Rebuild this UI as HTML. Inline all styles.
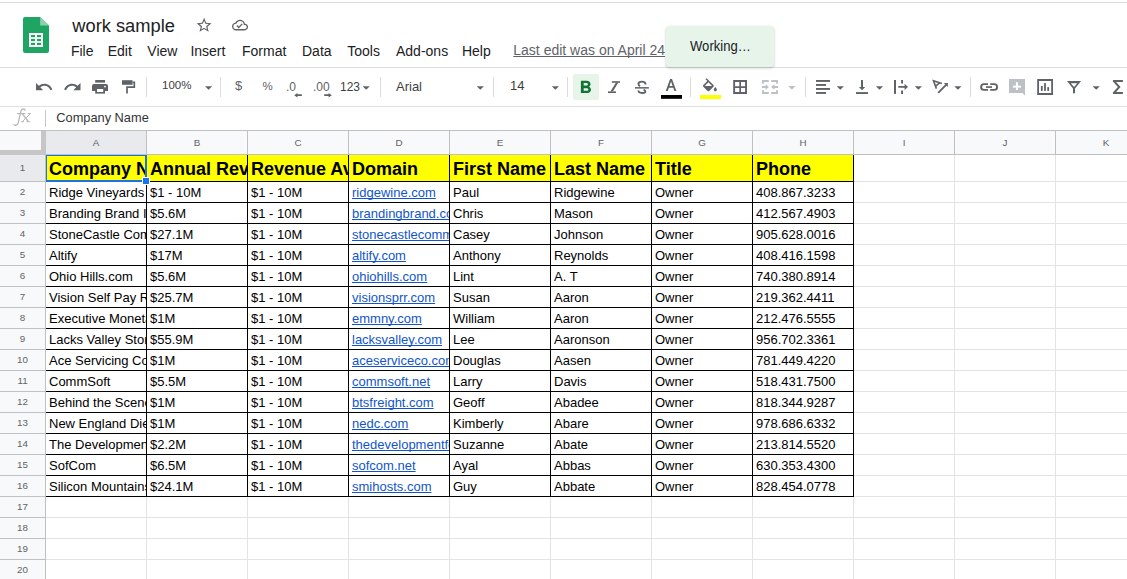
<!DOCTYPE html><html><head><meta charset="utf-8"><style>
html,body{margin:0;padding:0;background:#fff;width:1127px;height:579px;overflow:hidden;position:relative;font-family:"Liberation Sans",sans-serif}
.t{position:absolute;white-space:pre;line-height:normal}
.r{position:absolute}
.c{position:absolute;overflow:hidden;white-space:pre;line-height:normal}
.c span{position:absolute;white-space:pre}
</style></head><body>
<div class="r" style="left:0px;top:2px;width:1127px;height:1px;background:#dadce0;"></div>
<svg style="position:absolute;left:0;top:0" width="1127" height="130" viewBox="0 0 1127 130">
<path d="M25 17 H40.2 L49 25.4 V51 a2 2 0 0 1 -2 2 H25 a2 2 0 0 1 -2 -2 V19 a2 2 0 0 1 2 -2z" fill="#1fa463"/>
<path d="M40.2 17 L49 25.4 H40.2z" fill="#8ed1b1"/>
<rect x="29" y="33" width="14" height="14" fill="#fff"/>
<rect x="31" y="35" width="4" height="2.2" fill="#1fa463"/><rect x="37" y="35" width="4" height="2.2" fill="#1fa463"/>
<rect x="31" y="38.9" width="4" height="2.2" fill="#1fa463"/><rect x="37" y="38.9" width="4" height="2.2" fill="#1fa463"/>
<rect x="31" y="42.8" width="4" height="2.2" fill="#1fa463"/><rect x="37" y="42.8" width="4" height="2.2" fill="#1fa463"/>
</svg>
<div class="t" style="left:72.3px;top:15.14px;font-size:18.3px;color:#202124;font-weight:normal;">work sample</div>
<svg style="position:absolute;left:0;top:0" width="300" height="60" viewBox="0 0 300 60">
<path transform="translate(195.2,16.3) scale(0.74)" fill="#5f6368" d="M22 9.24l-7.19-.62L12 2 9.19 8.63 2 9.24l5.46 4.73L5.82 21 12 17.27 18.18 21l-1.63-7.03L22 9.24zM12 15.4l-3.76 2.27 1-4.28-3.32-2.88 4.38-.38L12 6.1l1.71 4.04 4.38.38-3.32 2.88 1 4.28L12 15.4z"/>
<path transform="translate(232,17) scale(0.67)" fill="#5f6368" d="M19.35 10.04C18.67 6.59 15.64 4 12 4 9.11 4 6.6 5.64 5.35 8.04 2.34 8.36 0 10.91 0 14c0 3.31 2.690 6 6 6h13c2.76 0 5-2.24 5-5 0-2.64-2.05-4.780-4.650-4.960zM19 18H6c-2.21 0-4-1.79-4-4 0-2.05 1.53-3.760 3.56-3.970l1.07-.11.5-.95C8.08 7.14 9.94 6 12 6c2.62 0 4.88 1.860 5.390 4.430l.3 1.5 1.53.11c1.56.1 2.78 1.41 2.78 2.96 0 1.65-1.35 3-3 3zm-9-3.820l-2.090-2.090L6.5 13.5 10 17l6.010-6.010-1.410-1.410z"/>
</svg>
<div class="t" style="left:70.9px;top:42.93px;font-size:14px;color:#202124;font-weight:normal;">File</div>
<div class="t" style="left:107.7px;top:42.93px;font-size:14px;color:#202124;font-weight:normal;">Edit</div>
<div class="t" style="left:147.3px;top:42.93px;font-size:14px;color:#202124;font-weight:normal;">View</div>
<div class="t" style="left:190.4px;top:42.93px;font-size:14px;color:#202124;font-weight:normal;">Insert</div>
<div class="t" style="left:242px;top:42.93px;font-size:14px;color:#202124;font-weight:normal;">Format</div>
<div class="t" style="left:302px;top:42.93px;font-size:14px;color:#202124;font-weight:normal;">Data</div>
<div class="t" style="left:347.3px;top:42.93px;font-size:14px;color:#202124;font-weight:normal;">Tools</div>
<div class="t" style="left:396px;top:42.93px;font-size:14px;color:#202124;font-weight:normal;">Add-ons</div>
<div class="t" style="left:461.9px;top:42.93px;font-size:14px;color:#202124;font-weight:normal;">Help</div>
<div class="t" style="left:513.3px;top:42.03px;font-size:14px;color:#5f6368;font-weight:normal;text-decoration:underline;text-decoration-skip-ink:none;">Last edit was on April 24</div>
<div class="r" style="left:0px;top:67px;width:1127px;height:1px;background:#dadce0;"></div>
<div class="r" style="left:0px;top:106px;width:1127px;height:1px;background:#e0e0e0;"></div>
<svg style="position:absolute;left:0;top:68px" width="1127" height="38" viewBox="0 68 1127 38">
<path transform="translate(34.4,77.4) scale(0.797)" fill="#5f6368" d="M12.5 8c-2.65 0-5.05.99-6.9 2.6L2 7v9h9l-3.62-3.62c1.39-1.16 3.16-1.880 5.120-1.880 3.54 0 6.55 2.31 7.6 5.5l2.37-.78C21.08 11.03 17.15 8 12.5 8z"/>
<path transform="translate(62.97,77.4) scale(0.797)" fill="#5f6368" d="M18.4 10.6C16.55 8.99 14.15 8 11.5 8c-4.65 0-8.58 3.03-9.96 7.22L3.9 16c1.05-3.19 4.05-5.5 7.6-5.5 1.95 0 3.73.72 5.12 1.88L13 16h9V7l-3.6 3.6z"/>
<rect x="95.2" y="80" width="9.8" height="2.6" fill="#5f6368"/>
<path d="M94 84 H106 a2 2 0 0 1 2 2 V91 H92 V86 a2 2 0 0 1 2 -2z" fill="#5f6368"/>
<rect x="95.2" y="88" width="9.8" height="5.6" fill="#5f6368"/>
<rect x="97" y="89" width="6.2" height="3" fill="#fff"/>
<circle cx="105" cy="86.6" r="0.9" fill="#fff"/>
<rect x="122" y="80.2" width="10.5" height="4.6" fill="#5f6368"/>
<path d="M132.5 82.3 H134.3 V87.2 H127 V93.6" fill="none" stroke="#5f6368" stroke-width="1.7"/>
<rect x="146" y="77" width="1" height="20" fill="#dadce0"/>
<rect x="220" y="77" width="1" height="20" fill="#dadce0"/>
<rect x="380" y="77" width="1" height="20" fill="#dadce0"/>
<rect x="493" y="77" width="1" height="20" fill="#dadce0"/>
<rect x="567" y="77" width="1" height="20" fill="#dadce0"/>
<rect x="690" y="77" width="1" height="20" fill="#dadce0"/>
<rect x="805" y="77" width="1" height="20" fill="#dadce0"/>
<rect x="970" y="77" width="1" height="20" fill="#dadce0"/>
<path d="M205 86.2 h7.2 l-3.6 3.6z" fill="#5f6368"/>
<path d="M362.6 86.2 h7.2 l-3.6 3.6z" fill="#5f6368"/>
<path d="M476.7 86.2 h7.2 l-3.6 3.6z" fill="#5f6368"/>
<path d="M551.8 86.2 h7.2 l-3.6 3.6z" fill="#5f6368"/>
<path d="M836.7 86.2 h7.2 l-3.6 3.6z" fill="#5f6368"/>
<path d="M875.9 86.2 h7.2 l-3.6 3.6z" fill="#5f6368"/>
<path d="M914.8 86.2 h7.2 l-3.6 3.6z" fill="#5f6368"/>
<path d="M954.3 86.2 h7.2 l-3.6 3.6z" fill="#5f6368"/>
<path d="M1092.6 86.2 h7.2 l-3.6 3.6z" fill="#5f6368"/>
<path d="M788.3 86.1 h7.2 l-3.6 3.6z" fill="#bdc1c6"/>
<path d="M301.9 94.3 V96 H297.5 V97.4 L294.2 95.15 L297.5 92.9 V94.3z" fill="#5f6368"/>
<path d="M324.2 94.3 V96 H328.6 V97.4 L331.8 95.15 L328.6 92.9 V94.3z" fill="#5f6368"/>
<rect x="573" y="74" width="26" height="26" rx="2" fill="#e6f4ea"/>
<path transform="translate(574.3,77.32) scale(0.94,0.87)" fill="#137333" d="M15.6 10.79c.97-.67 1.65-1.77 1.650-2.790 0-2.26-1.75-4-4-4H7v14h7.04c2.09 0 3.71-1.7 3.71-3.790 0-1.520-.86-2.820-2.150-3.420zM10 6.5h3c.83 0 1.5.67 1.5 1.5s-.67 1.5-1.5 1.5h-3v-3zm3.5 9H10v-3h3.5c.83 0 1.5.67 1.5 1.5s-.67 1.5-1.5 1.5z"/>
<rect x="611.8" y="81.2" width="8.2" height="1.6" fill="#5f6368"/>
<rect x="608" y="91.4" width="8" height="1.6" fill="#5f6368"/>
<path d="M616 82.6 L618.4 82.6 L612.8 91.6 L610.4 91.6z" fill="#5f6368"/>
<rect x="635" y="87.1" width="13.9" height="1.5" fill="#5f6368"/>
<path d="M645.6 84.4 C645.6 82.2 643.8 81.6 642 81.6 C640 81.6 638.4 82.4 638.4 84 C638.4 85.2 639.2 85.8 640.2 86.2" fill="none" stroke="#5f6368" stroke-width="1.8"/>
<path d="M643.6 89.6 C644.6 90 645.4 90.6 645.4 91.4 C645.4 92.5 644 93 642 93 C639.8 93 638.4 92.2 638.4 90.6" fill="none" stroke="#5f6368" stroke-width="1.8"/>
<path d="M665.7 90.9 L670.1 79 H672 L676.4 90.9 H674.4 L673.2 87.7 H668.9 L667.7 90.9z M669.5 86 H672.6 L671.05 81.6z" fill="#5f6368" fill-rule="evenodd"/>
<rect x="661" y="95" width="21" height="3.8" fill="#000"/>
<path transform="translate(700.7,78.2) scale(0.77)" fill="#5f6368" d="M16.56 8.94L7.62 0 6.21 1.41l2.38 2.38-5.15 5.15c-.59.59-.59 1.54 0 2.12l5.5 5.5c.29.29.68.44 1.06.44s.77-.15 1.06-.44l5.5-5.5c.59-.58.59-1.53 0-2.12zM5.21 10L10 5.21 14.79 10H5.21zM19 11.5s-2 2.17-2 3.5c0 1.1.9 2 2 2s2-.9 2-2c0-1.33-2-3.5-2-3.5z"/>
<rect x="700" y="95" width="21" height="4" fill="#ffff00"/>
<path fill="#5f6368" fill-rule="evenodd" d="M733.2 80 H747 V93.9 H733.2z M735.1 81.9 V86.2 H739.3 V81.9z M741 81.9 V86.2 H745.1 V81.9z M735.1 87.9 V92 H739.3 V87.9z M741 87.9 V92 H745.1 V87.9z"/>
<path fill="#bdc1c6" d="M762 80 H768.8 V81.9 H763.9 V83.8 H762z M778 80 H771.2 V81.9 H776.1 V83.8 H778z M762 93.9 H768.8 V92 H763.9 V90.3 H762z M778 93.9 H771.2 V92 H776.1 V90.3 H778z"/>
<path fill="#bdc1c6" d="M762 86.1 H765.6 V84.2 L768.9 87 L765.6 89.8 V87.9 H762z M778 86.1 H774.4 V84.2 L771.1 87 L774.4 89.8 V87.9 H778z"/>
<rect x="816" y="80" width="14" height="1.9" fill="#5f6368"/>
<rect x="816" y="84" width="10" height="1.9" fill="#5f6368"/>
<rect x="816" y="88" width="14" height="1.9" fill="#5f6368"/>
<rect x="816" y="92" width="10" height="1.9" fill="#5f6368"/>
<rect x="861" y="80" width="2" height="7.5" fill="#5f6368"/>
<path d="M858.9 87 H865.2 L862.05 90.2z" fill="#5f6368"/>
<rect x="856" y="92.1" width="12" height="1.9" fill="#5f6368"/>
<rect x="894" y="80" width="2" height="13.9" fill="#5f6368"/>
<rect x="901.1" y="80" width="1.9" height="3.5" fill="#5f6368"/>
<rect x="901.1" y="90.5" width="1.9" height="3.5" fill="#5f6368"/>
<path d="M898.3 86 H904.6 V83.8 L908 86.9 L904.6 90 V87.8 H898.3z" fill="#5f6368"/>
<path d="M936.4 88.6 L933.5 80.8 L941.9 83.5 M935.3 86.3 L939.7 82.8" fill="none" stroke="#5f6368" stroke-width="1.6" stroke-linejoin="miter"/>
<path d="M938.2 92.8 L946.3 84.7" fill="none" stroke="#5f6368" stroke-width="1.9"/>
<path d="M947.9 83.1 L947.9 87.1 L943.9 83.1z" fill="#5f6368"/>
<path d="M988 84.1 H984 A2.9 2.9 0 0 0 984 89.9 H988 M990.2 84.1 H994.2 A2.9 2.9 0 0 1 994.2 89.9 H990.2" fill="none" stroke="#5f6368" stroke-width="1.9"/>
<rect x="986" y="86.2" width="6" height="1.7" fill="#5f6368"/>
<path d="M1009 79 H1025 V95.6 L1022.4 93 H1009z" fill="#bdc1c6"/>
<rect x="1012.9" y="85.7" width="8.1" height="1.9" fill="#fff"/><rect x="1015.9" y="82.2" width="2.1" height="7.8" fill="#fff"/>
<path fill="#5f6368" fill-rule="evenodd" d="M1037.2 79.1 H1053 V94.9 H1037.2z M1039 80.9 V93.1 H1051.2 V80.9z"/>
<rect x="1040.9" y="86" width="1.8" height="4.9" fill="#5f6368"/><rect x="1044.1" y="83.1" width="1.8" height="7.8" fill="#5f6368"/><rect x="1047.3" y="87.1" width="1.8" height="3.8" fill="#5f6368"/>
<path fill="#5f6368" fill-rule="evenodd" d="M1067 81 H1081.1 L1075 88.4 V92.9 L1073 93.6 V88.4z M1070.8 83.3 H1077.3 L1074 87.1z"/>
<path fill="#5f6368" d="M1112.9 80 H1122.9 V81.9 H1116.1 L1120.6 86.9 L1116.1 92 H1122.9 V93.9 H1112.9 V92.4 L1117.9 86.9 L1112.9 81.5z"/>
</svg>
<div class="t" style="left:162px;top:79.19px;font-size:11.5px;color:#3c4043;font-weight:normal;">100%</div>
<div class="t" style="left:235px;top:78.23px;font-size:13px;color:#5f6368;font-weight:normal;">$</div>
<div class="t" style="left:262.5px;top:80.49px;font-size:11.5px;color:#5f6368;font-weight:normal;">%</div>
<div class="t" style="left:286px;top:80.04px;font-size:12px;color:#5f6368;font-weight:normal;">.0</div>
<div class="t" style="left:313px;top:80.04px;font-size:12px;color:#5f6368;font-weight:normal;">.00</div>
<div class="t" style="left:340px;top:80.14px;font-size:12px;color:#3c4043;font-weight:normal;">123</div>
<div class="t" style="left:396px;top:79.23px;font-size:13px;color:#3c4043;font-weight:normal;">Arial</div>
<div class="t" style="left:510px;top:78.23px;font-size:13px;color:#3c4043;font-weight:normal;">14</div>
<svg style="position:absolute;left:0;top:106px" width="46" height="24" viewBox="0 106 46 24"><g fill="none" stroke="#b8b8b8"><path d="M25.4 110.6 C24.8 108.5 21.6 108.2 20.9 111.2 L18.3 122.6 C17.7 125.3 15 126 13.3 124.4" stroke-width="1.3"/><path d="M16.9 113.6 H25.4" stroke-width="1.1"/><path d="M22.4 113.9 L28.4 121.6" stroke-width="1.5"/><path d="M30.2 113.8 L22.3 121.6" stroke-width="1"/><path d="M27.8 113.5 H30.9 M21 121.7 H24 M26.4 121.7 H30" stroke-width="1"/></g></svg>
<div class="r" style="left:45px;top:110px;width:1px;height:17px;background:#c8c8c8;"></div>
<div class="t" style="left:56.3px;top:110.42px;font-size:12.8px;color:#333333;font-weight:normal;">Company Name</div>
<div class="r" style="left:0;top:130px;width:1127px;height:1px;background:#c0c0c0"></div>
<div class="r" style="left:46px;top:131px;width:1081px;height:23px;background:#f8f9fa"></div>
<div class="r" style="left:46px;top:131px;width:100px;height:23px;background:#e8eaed"></div>
<div class="r" style="left:0;top:155px;width:45px;height:424px;background:#f8f9fa"></div>
<div class="r" style="left:0;top:155px;width:45px;height:26px;background:#e8eaed"></div>
<div class="r" style="left:0;top:131px;width:41px;height:19px;background:#f8f9fa"></div>
<div class="r" style="left:41px;top:131px;width:5px;height:24px;background:#c6c6c6"></div>
<div class="r" style="left:0;top:150px;width:46px;height:5px;background:#c6c6c6"></div>
<div class="r" style="left:46px;top:154px;width:1081px;height:1px;background:#c0c0c0"></div>
<div class="r" style="left:45px;top:155px;width:1px;height:424px;background:#c0c0c0"></div>
<div class="r" style="left:146px;top:131px;width:1px;height:23px;background:#c0c0c0"></div>
<div class="t" style="left:46px;top:136.83px;width:100px;text-align:center;font-size:9.8px;color:#5f6368">A</div>
<div class="r" style="left:247px;top:131px;width:1px;height:23px;background:#c0c0c0"></div>
<div class="t" style="left:147px;top:136.83px;width:100px;text-align:center;font-size:9.8px;color:#5f6368">B</div>
<div class="r" style="left:348px;top:131px;width:1px;height:23px;background:#c0c0c0"></div>
<div class="t" style="left:248px;top:136.83px;width:100px;text-align:center;font-size:9.8px;color:#5f6368">C</div>
<div class="r" style="left:449px;top:131px;width:1px;height:23px;background:#c0c0c0"></div>
<div class="t" style="left:349px;top:136.83px;width:100px;text-align:center;font-size:9.8px;color:#5f6368">D</div>
<div class="r" style="left:550px;top:131px;width:1px;height:23px;background:#c0c0c0"></div>
<div class="t" style="left:450px;top:136.83px;width:100px;text-align:center;font-size:9.8px;color:#5f6368">E</div>
<div class="r" style="left:651px;top:131px;width:1px;height:23px;background:#c0c0c0"></div>
<div class="t" style="left:551px;top:136.83px;width:100px;text-align:center;font-size:9.8px;color:#5f6368">F</div>
<div class="r" style="left:752px;top:131px;width:1px;height:23px;background:#c0c0c0"></div>
<div class="t" style="left:652px;top:136.83px;width:100px;text-align:center;font-size:9.8px;color:#5f6368">G</div>
<div class="r" style="left:853px;top:131px;width:1px;height:23px;background:#c0c0c0"></div>
<div class="t" style="left:753px;top:136.83px;width:100px;text-align:center;font-size:9.8px;color:#5f6368">H</div>
<div class="r" style="left:954px;top:131px;width:1px;height:23px;background:#c0c0c0"></div>
<div class="t" style="left:854px;top:136.83px;width:100px;text-align:center;font-size:9.8px;color:#5f6368">I</div>
<div class="r" style="left:1055px;top:131px;width:1px;height:23px;background:#c0c0c0"></div>
<div class="t" style="left:955px;top:136.83px;width:100px;text-align:center;font-size:9.8px;color:#5f6368">J</div>
<div class="r" style="left:1156px;top:131px;width:1px;height:23px;background:#c0c0c0"></div>
<div class="t" style="left:1056px;top:136.83px;width:100px;text-align:center;font-size:9.8px;color:#5f6368">K</div>
<div class="r" style="left:0;top:181px;width:45px;height:1px;background:#c0c0c0"></div>
<div class="t" style="left:0px;top:162.13px;width:45px;text-align:center;font-size:9.8px;color:#5f6368">1</div>
<div class="r" style="left:46px;top:181px;width:1081px;height:1px;background:#e2e3e3"></div>
<div class="r" style="left:0;top:202px;width:45px;height:1px;background:#c0c0c0"></div>
<div class="t" style="left:0px;top:186.13px;width:45px;text-align:center;font-size:9.8px;color:#5f6368">2</div>
<div class="r" style="left:46px;top:202px;width:1081px;height:1px;background:#e2e3e3"></div>
<div class="r" style="left:0;top:223px;width:45px;height:1px;background:#c0c0c0"></div>
<div class="t" style="left:0px;top:207.13px;width:45px;text-align:center;font-size:9.8px;color:#5f6368">3</div>
<div class="r" style="left:46px;top:223px;width:1081px;height:1px;background:#e2e3e3"></div>
<div class="r" style="left:0;top:244px;width:45px;height:1px;background:#c0c0c0"></div>
<div class="t" style="left:0px;top:228.13px;width:45px;text-align:center;font-size:9.8px;color:#5f6368">4</div>
<div class="r" style="left:46px;top:244px;width:1081px;height:1px;background:#e2e3e3"></div>
<div class="r" style="left:0;top:265px;width:45px;height:1px;background:#c0c0c0"></div>
<div class="t" style="left:0px;top:249.13px;width:45px;text-align:center;font-size:9.8px;color:#5f6368">5</div>
<div class="r" style="left:46px;top:265px;width:1081px;height:1px;background:#e2e3e3"></div>
<div class="r" style="left:0;top:286px;width:45px;height:1px;background:#c0c0c0"></div>
<div class="t" style="left:0px;top:270.13px;width:45px;text-align:center;font-size:9.8px;color:#5f6368">6</div>
<div class="r" style="left:46px;top:286px;width:1081px;height:1px;background:#e2e3e3"></div>
<div class="r" style="left:0;top:307px;width:45px;height:1px;background:#c0c0c0"></div>
<div class="t" style="left:0px;top:291.13px;width:45px;text-align:center;font-size:9.8px;color:#5f6368">7</div>
<div class="r" style="left:46px;top:307px;width:1081px;height:1px;background:#e2e3e3"></div>
<div class="r" style="left:0;top:328px;width:45px;height:1px;background:#c0c0c0"></div>
<div class="t" style="left:0px;top:312.13px;width:45px;text-align:center;font-size:9.8px;color:#5f6368">8</div>
<div class="r" style="left:46px;top:328px;width:1081px;height:1px;background:#e2e3e3"></div>
<div class="r" style="left:0;top:349px;width:45px;height:1px;background:#c0c0c0"></div>
<div class="t" style="left:0px;top:333.13px;width:45px;text-align:center;font-size:9.8px;color:#5f6368">9</div>
<div class="r" style="left:46px;top:349px;width:1081px;height:1px;background:#e2e3e3"></div>
<div class="r" style="left:0;top:370px;width:45px;height:1px;background:#c0c0c0"></div>
<div class="t" style="left:0px;top:354.13px;width:45px;text-align:center;font-size:9.8px;color:#5f6368">10</div>
<div class="r" style="left:46px;top:370px;width:1081px;height:1px;background:#e2e3e3"></div>
<div class="r" style="left:0;top:391px;width:45px;height:1px;background:#c0c0c0"></div>
<div class="t" style="left:0px;top:375.13px;width:45px;text-align:center;font-size:9.8px;color:#5f6368">11</div>
<div class="r" style="left:46px;top:391px;width:1081px;height:1px;background:#e2e3e3"></div>
<div class="r" style="left:0;top:412px;width:45px;height:1px;background:#c0c0c0"></div>
<div class="t" style="left:0px;top:396.13px;width:45px;text-align:center;font-size:9.8px;color:#5f6368">12</div>
<div class="r" style="left:46px;top:412px;width:1081px;height:1px;background:#e2e3e3"></div>
<div class="r" style="left:0;top:433px;width:45px;height:1px;background:#c0c0c0"></div>
<div class="t" style="left:0px;top:417.13px;width:45px;text-align:center;font-size:9.8px;color:#5f6368">13</div>
<div class="r" style="left:46px;top:433px;width:1081px;height:1px;background:#e2e3e3"></div>
<div class="r" style="left:0;top:454px;width:45px;height:1px;background:#c0c0c0"></div>
<div class="t" style="left:0px;top:438.13px;width:45px;text-align:center;font-size:9.8px;color:#5f6368">14</div>
<div class="r" style="left:46px;top:454px;width:1081px;height:1px;background:#e2e3e3"></div>
<div class="r" style="left:0;top:475px;width:45px;height:1px;background:#c0c0c0"></div>
<div class="t" style="left:0px;top:459.13px;width:45px;text-align:center;font-size:9.8px;color:#5f6368">15</div>
<div class="r" style="left:46px;top:475px;width:1081px;height:1px;background:#e2e3e3"></div>
<div class="r" style="left:0;top:496px;width:45px;height:1px;background:#c0c0c0"></div>
<div class="t" style="left:0px;top:480.13px;width:45px;text-align:center;font-size:9.8px;color:#5f6368">16</div>
<div class="r" style="left:46px;top:496px;width:1081px;height:1px;background:#e2e3e3"></div>
<div class="r" style="left:0;top:517px;width:45px;height:1px;background:#c0c0c0"></div>
<div class="t" style="left:0px;top:501.13px;width:45px;text-align:center;font-size:9.8px;color:#5f6368">17</div>
<div class="r" style="left:46px;top:517px;width:1081px;height:1px;background:#e2e3e3"></div>
<div class="r" style="left:0;top:538px;width:45px;height:1px;background:#c0c0c0"></div>
<div class="t" style="left:0px;top:522.13px;width:45px;text-align:center;font-size:9.8px;color:#5f6368">18</div>
<div class="r" style="left:46px;top:538px;width:1081px;height:1px;background:#e2e3e3"></div>
<div class="r" style="left:0;top:559px;width:45px;height:1px;background:#c0c0c0"></div>
<div class="t" style="left:0px;top:543.13px;width:45px;text-align:center;font-size:9.8px;color:#5f6368">19</div>
<div class="r" style="left:46px;top:559px;width:1081px;height:1px;background:#e2e3e3"></div>
<div class="r" style="left:0;top:580px;width:45px;height:1px;background:#c0c0c0"></div>
<div class="t" style="left:0px;top:564.13px;width:45px;text-align:center;font-size:9.8px;color:#5f6368">20</div>
<div class="r" style="left:46px;top:580px;width:1081px;height:1px;background:#e2e3e3"></div>
<div class="r" style="left:146px;top:155px;width:1px;height:424px;background:#e2e3e3"></div>
<div class="r" style="left:247px;top:155px;width:1px;height:424px;background:#e2e3e3"></div>
<div class="r" style="left:348px;top:155px;width:1px;height:424px;background:#e2e3e3"></div>
<div class="r" style="left:449px;top:155px;width:1px;height:424px;background:#e2e3e3"></div>
<div class="r" style="left:550px;top:155px;width:1px;height:424px;background:#e2e3e3"></div>
<div class="r" style="left:651px;top:155px;width:1px;height:424px;background:#e2e3e3"></div>
<div class="r" style="left:752px;top:155px;width:1px;height:424px;background:#e2e3e3"></div>
<div class="r" style="left:853px;top:155px;width:1px;height:424px;background:#e2e3e3"></div>
<div class="r" style="left:954px;top:155px;width:1px;height:424px;background:#e2e3e3"></div>
<div class="r" style="left:1055px;top:155px;width:1px;height:424px;background:#e2e3e3"></div>
<div class="r" style="left:1156px;top:155px;width:1px;height:424px;background:#e2e3e3"></div>
<div class="r" style="left:46px;top:155px;width:807px;height:26px;background:#ffff00"></div>
<div class="r" style="left:46px;top:181px;width:808px;height:1px;background:#000"></div>
<div class="r" style="left:46px;top:202px;width:808px;height:1px;background:#000"></div>
<div class="r" style="left:46px;top:223px;width:808px;height:1px;background:#000"></div>
<div class="r" style="left:46px;top:244px;width:808px;height:1px;background:#000"></div>
<div class="r" style="left:46px;top:265px;width:808px;height:1px;background:#000"></div>
<div class="r" style="left:46px;top:286px;width:808px;height:1px;background:#000"></div>
<div class="r" style="left:46px;top:307px;width:808px;height:1px;background:#000"></div>
<div class="r" style="left:46px;top:328px;width:808px;height:1px;background:#000"></div>
<div class="r" style="left:46px;top:349px;width:808px;height:1px;background:#000"></div>
<div class="r" style="left:46px;top:370px;width:808px;height:1px;background:#000"></div>
<div class="r" style="left:46px;top:391px;width:808px;height:1px;background:#000"></div>
<div class="r" style="left:46px;top:412px;width:808px;height:1px;background:#000"></div>
<div class="r" style="left:46px;top:433px;width:808px;height:1px;background:#000"></div>
<div class="r" style="left:46px;top:454px;width:808px;height:1px;background:#000"></div>
<div class="r" style="left:46px;top:475px;width:808px;height:1px;background:#000"></div>
<div class="r" style="left:46px;top:496px;width:808px;height:1px;background:#000"></div>
<div class="r" style="left:146px;top:155px;width:1px;height:342px;background:#000"></div>
<div class="r" style="left:247px;top:155px;width:1px;height:342px;background:#000"></div>
<div class="r" style="left:348px;top:155px;width:1px;height:342px;background:#000"></div>
<div class="r" style="left:449px;top:155px;width:1px;height:342px;background:#000"></div>
<div class="r" style="left:550px;top:155px;width:1px;height:342px;background:#000"></div>
<div class="r" style="left:651px;top:155px;width:1px;height:342px;background:#000"></div>
<div class="r" style="left:752px;top:155px;width:1px;height:342px;background:#000"></div>
<div class="r" style="left:853px;top:155px;width:1px;height:342px;background:#000"></div>
<div class="c" style="left:46px;top:155px;width:100px;height:26px"><span style="left:3px;top:4.31px;font-size:18px;font-weight:bold;color:#000;">Company Name</span></div>
<div class="c" style="left:147px;top:155px;width:100px;height:26px"><span style="left:3px;top:4.31px;font-size:18px;font-weight:bold;color:#000;">Annual Revenue</span></div>
<div class="c" style="left:248px;top:155px;width:100px;height:26px"><span style="left:3px;top:4.31px;font-size:18px;font-weight:bold;color:#000;">Revenue Avg</span></div>
<div class="c" style="left:349px;top:155px;width:100px;height:26px"><span style="left:3px;top:4.31px;font-size:18px;font-weight:bold;color:#000;">Domain</span></div>
<div class="c" style="left:450px;top:155px;width:100px;height:26px"><span style="left:3px;top:4.31px;font-size:18px;font-weight:bold;color:#000;">First Name</span></div>
<div class="c" style="left:551px;top:155px;width:100px;height:26px"><span style="left:3px;top:4.31px;font-size:18px;font-weight:bold;color:#000;">Last Name</span></div>
<div class="c" style="left:652px;top:155px;width:100px;height:26px"><span style="left:3px;top:4.31px;font-size:18px;font-weight:bold;color:#000;">Title</span></div>
<div class="c" style="left:753px;top:155px;width:100px;height:26px"><span style="left:3px;top:4.31px;font-size:18px;font-weight:bold;color:#000;">Phone</span></div>
<div class="c" style="left:46px;top:182px;width:100px;height:20px"><span style="left:3px;top:3.04px;font-size:13px;font-weight:normal;color:#000;">Ridge Vineyards</span></div>
<div class="c" style="left:147px;top:182px;width:100px;height:20px"><span style="left:3px;top:3.04px;font-size:13px;font-weight:normal;color:#000;">$1 - 10M</span></div>
<div class="c" style="left:248px;top:182px;width:100px;height:20px"><span style="left:3px;top:3.04px;font-size:13px;font-weight:normal;color:#000;">$1 - 10M</span></div>
<div class="c" style="left:349px;top:182px;width:100px;height:20px"><span style="left:3px;top:3.04px;font-size:13px;font-weight:normal;color:#1155cc;text-decoration:underline;text-decoration-skip-ink:none;">ridgewine.com</span></div>
<div class="c" style="left:450px;top:182px;width:100px;height:20px"><span style="left:3px;top:3.04px;font-size:13px;font-weight:normal;color:#000;">Paul</span></div>
<div class="c" style="left:551px;top:182px;width:100px;height:20px"><span style="left:3px;top:3.04px;font-size:13px;font-weight:normal;color:#000;">Ridgewine</span></div>
<div class="c" style="left:652px;top:182px;width:100px;height:20px"><span style="left:3px;top:3.04px;font-size:13px;font-weight:normal;color:#000;">Owner</span></div>
<div class="c" style="left:753px;top:182px;width:100px;height:20px"><span style="left:3px;top:3.04px;font-size:13px;font-weight:normal;color:#000;">408.867.3233</span></div>
<div class="c" style="left:46px;top:203px;width:100px;height:20px"><span style="left:3px;top:3.04px;font-size:13px;font-weight:normal;color:#000;">Branding Brand Inc</span></div>
<div class="c" style="left:147px;top:203px;width:100px;height:20px"><span style="left:3px;top:3.04px;font-size:13px;font-weight:normal;color:#000;">$5.6M</span></div>
<div class="c" style="left:248px;top:203px;width:100px;height:20px"><span style="left:3px;top:3.04px;font-size:13px;font-weight:normal;color:#000;">$1 - 10M</span></div>
<div class="c" style="left:349px;top:203px;width:100px;height:20px"><span style="left:3px;top:3.04px;font-size:13px;font-weight:normal;color:#1155cc;text-decoration:underline;text-decoration-skip-ink:none;">brandingbrand.com</span></div>
<div class="c" style="left:450px;top:203px;width:100px;height:20px"><span style="left:3px;top:3.04px;font-size:13px;font-weight:normal;color:#000;">Chris</span></div>
<div class="c" style="left:551px;top:203px;width:100px;height:20px"><span style="left:3px;top:3.04px;font-size:13px;font-weight:normal;color:#000;">Mason</span></div>
<div class="c" style="left:652px;top:203px;width:100px;height:20px"><span style="left:3px;top:3.04px;font-size:13px;font-weight:normal;color:#000;">Owner</span></div>
<div class="c" style="left:753px;top:203px;width:100px;height:20px"><span style="left:3px;top:3.04px;font-size:13px;font-weight:normal;color:#000;">412.567.4903</span></div>
<div class="c" style="left:46px;top:224px;width:100px;height:20px"><span style="left:3px;top:3.04px;font-size:13px;font-weight:normal;color:#000;">StoneCastle Communications</span></div>
<div class="c" style="left:147px;top:224px;width:100px;height:20px"><span style="left:3px;top:3.04px;font-size:13px;font-weight:normal;color:#000;">$27.1M</span></div>
<div class="c" style="left:248px;top:224px;width:100px;height:20px"><span style="left:3px;top:3.04px;font-size:13px;font-weight:normal;color:#000;">$1 - 10M</span></div>
<div class="c" style="left:349px;top:224px;width:100px;height:20px"><span style="left:3px;top:3.04px;font-size:13px;font-weight:normal;color:#1155cc;text-decoration:underline;text-decoration-skip-ink:none;">stonecastlecommunications.com</span></div>
<div class="c" style="left:450px;top:224px;width:100px;height:20px"><span style="left:3px;top:3.04px;font-size:13px;font-weight:normal;color:#000;">Casey</span></div>
<div class="c" style="left:551px;top:224px;width:100px;height:20px"><span style="left:3px;top:3.04px;font-size:13px;font-weight:normal;color:#000;">Johnson</span></div>
<div class="c" style="left:652px;top:224px;width:100px;height:20px"><span style="left:3px;top:3.04px;font-size:13px;font-weight:normal;color:#000;">Owner</span></div>
<div class="c" style="left:753px;top:224px;width:100px;height:20px"><span style="left:3px;top:3.04px;font-size:13px;font-weight:normal;color:#000;">905.628.0016</span></div>
<div class="c" style="left:46px;top:245px;width:100px;height:20px"><span style="left:3px;top:3.04px;font-size:13px;font-weight:normal;color:#000;">Altify</span></div>
<div class="c" style="left:147px;top:245px;width:100px;height:20px"><span style="left:3px;top:3.04px;font-size:13px;font-weight:normal;color:#000;">$17M</span></div>
<div class="c" style="left:248px;top:245px;width:100px;height:20px"><span style="left:3px;top:3.04px;font-size:13px;font-weight:normal;color:#000;">$1 - 10M</span></div>
<div class="c" style="left:349px;top:245px;width:100px;height:20px"><span style="left:3px;top:3.04px;font-size:13px;font-weight:normal;color:#1155cc;text-decoration:underline;text-decoration-skip-ink:none;">altify.com</span></div>
<div class="c" style="left:450px;top:245px;width:100px;height:20px"><span style="left:3px;top:3.04px;font-size:13px;font-weight:normal;color:#000;">Anthony</span></div>
<div class="c" style="left:551px;top:245px;width:100px;height:20px"><span style="left:3px;top:3.04px;font-size:13px;font-weight:normal;color:#000;">Reynolds</span></div>
<div class="c" style="left:652px;top:245px;width:100px;height:20px"><span style="left:3px;top:3.04px;font-size:13px;font-weight:normal;color:#000;">Owner</span></div>
<div class="c" style="left:753px;top:245px;width:100px;height:20px"><span style="left:3px;top:3.04px;font-size:13px;font-weight:normal;color:#000;">408.416.1598</span></div>
<div class="c" style="left:46px;top:266px;width:100px;height:20px"><span style="left:3px;top:3.04px;font-size:13px;font-weight:normal;color:#000;">Ohio Hills.com</span></div>
<div class="c" style="left:147px;top:266px;width:100px;height:20px"><span style="left:3px;top:3.04px;font-size:13px;font-weight:normal;color:#000;">$5.6M</span></div>
<div class="c" style="left:248px;top:266px;width:100px;height:20px"><span style="left:3px;top:3.04px;font-size:13px;font-weight:normal;color:#000;">$1 - 10M</span></div>
<div class="c" style="left:349px;top:266px;width:100px;height:20px"><span style="left:3px;top:3.04px;font-size:13px;font-weight:normal;color:#1155cc;text-decoration:underline;text-decoration-skip-ink:none;">ohiohills.com</span></div>
<div class="c" style="left:450px;top:266px;width:100px;height:20px"><span style="left:3px;top:3.04px;font-size:13px;font-weight:normal;color:#000;">Lint</span></div>
<div class="c" style="left:551px;top:266px;width:100px;height:20px"><span style="left:3px;top:3.04px;font-size:13px;font-weight:normal;color:#000;">A. T</span></div>
<div class="c" style="left:652px;top:266px;width:100px;height:20px"><span style="left:3px;top:3.04px;font-size:13px;font-weight:normal;color:#000;">Owner</span></div>
<div class="c" style="left:753px;top:266px;width:100px;height:20px"><span style="left:3px;top:3.04px;font-size:13px;font-weight:normal;color:#000;">740.380.8914</span></div>
<div class="c" style="left:46px;top:287px;width:100px;height:20px"><span style="left:3px;top:3.04px;font-size:13px;font-weight:normal;color:#000;">Vision Self Pay Relief</span></div>
<div class="c" style="left:147px;top:287px;width:100px;height:20px"><span style="left:3px;top:3.04px;font-size:13px;font-weight:normal;color:#000;">$25.7M</span></div>
<div class="c" style="left:248px;top:287px;width:100px;height:20px"><span style="left:3px;top:3.04px;font-size:13px;font-weight:normal;color:#000;">$1 - 10M</span></div>
<div class="c" style="left:349px;top:287px;width:100px;height:20px"><span style="left:3px;top:3.04px;font-size:13px;font-weight:normal;color:#1155cc;text-decoration:underline;text-decoration-skip-ink:none;">visionsprr.com</span></div>
<div class="c" style="left:450px;top:287px;width:100px;height:20px"><span style="left:3px;top:3.04px;font-size:13px;font-weight:normal;color:#000;">Susan</span></div>
<div class="c" style="left:551px;top:287px;width:100px;height:20px"><span style="left:3px;top:3.04px;font-size:13px;font-weight:normal;color:#000;">Aaron</span></div>
<div class="c" style="left:652px;top:287px;width:100px;height:20px"><span style="left:3px;top:3.04px;font-size:13px;font-weight:normal;color:#000;">Owner</span></div>
<div class="c" style="left:753px;top:287px;width:100px;height:20px"><span style="left:3px;top:3.04px;font-size:13px;font-weight:normal;color:#000;">219.362.4411</span></div>
<div class="c" style="left:46px;top:308px;width:100px;height:20px"><span style="left:3px;top:3.04px;font-size:13px;font-weight:normal;color:#000;">Executive Monetary</span></div>
<div class="c" style="left:147px;top:308px;width:100px;height:20px"><span style="left:3px;top:3.04px;font-size:13px;font-weight:normal;color:#000;">$1M</span></div>
<div class="c" style="left:248px;top:308px;width:100px;height:20px"><span style="left:3px;top:3.04px;font-size:13px;font-weight:normal;color:#000;">$1 - 10M</span></div>
<div class="c" style="left:349px;top:308px;width:100px;height:20px"><span style="left:3px;top:3.04px;font-size:13px;font-weight:normal;color:#1155cc;text-decoration:underline;text-decoration-skip-ink:none;">emmny.com</span></div>
<div class="c" style="left:450px;top:308px;width:100px;height:20px"><span style="left:3px;top:3.04px;font-size:13px;font-weight:normal;color:#000;">William</span></div>
<div class="c" style="left:551px;top:308px;width:100px;height:20px"><span style="left:3px;top:3.04px;font-size:13px;font-weight:normal;color:#000;">Aaron</span></div>
<div class="c" style="left:652px;top:308px;width:100px;height:20px"><span style="left:3px;top:3.04px;font-size:13px;font-weight:normal;color:#000;">Owner</span></div>
<div class="c" style="left:753px;top:308px;width:100px;height:20px"><span style="left:3px;top:3.04px;font-size:13px;font-weight:normal;color:#000;">212.476.5555</span></div>
<div class="c" style="left:46px;top:329px;width:100px;height:20px"><span style="left:3px;top:3.04px;font-size:13px;font-weight:normal;color:#000;">Lacks Valley Stone</span></div>
<div class="c" style="left:147px;top:329px;width:100px;height:20px"><span style="left:3px;top:3.04px;font-size:13px;font-weight:normal;color:#000;">$55.9M</span></div>
<div class="c" style="left:248px;top:329px;width:100px;height:20px"><span style="left:3px;top:3.04px;font-size:13px;font-weight:normal;color:#000;">$1 - 10M</span></div>
<div class="c" style="left:349px;top:329px;width:100px;height:20px"><span style="left:3px;top:3.04px;font-size:13px;font-weight:normal;color:#1155cc;text-decoration:underline;text-decoration-skip-ink:none;">lacksvalley.com</span></div>
<div class="c" style="left:450px;top:329px;width:100px;height:20px"><span style="left:3px;top:3.04px;font-size:13px;font-weight:normal;color:#000;">Lee</span></div>
<div class="c" style="left:551px;top:329px;width:100px;height:20px"><span style="left:3px;top:3.04px;font-size:13px;font-weight:normal;color:#000;">Aaronson</span></div>
<div class="c" style="left:652px;top:329px;width:100px;height:20px"><span style="left:3px;top:3.04px;font-size:13px;font-weight:normal;color:#000;">Owner</span></div>
<div class="c" style="left:753px;top:329px;width:100px;height:20px"><span style="left:3px;top:3.04px;font-size:13px;font-weight:normal;color:#000;">956.702.3361</span></div>
<div class="c" style="left:46px;top:350px;width:100px;height:20px"><span style="left:3px;top:3.04px;font-size:13px;font-weight:normal;color:#000;">Ace Servicing Co</span></div>
<div class="c" style="left:147px;top:350px;width:100px;height:20px"><span style="left:3px;top:3.04px;font-size:13px;font-weight:normal;color:#000;">$1M</span></div>
<div class="c" style="left:248px;top:350px;width:100px;height:20px"><span style="left:3px;top:3.04px;font-size:13px;font-weight:normal;color:#000;">$1 - 10M</span></div>
<div class="c" style="left:349px;top:350px;width:100px;height:20px"><span style="left:3px;top:3.04px;font-size:13px;font-weight:normal;color:#1155cc;text-decoration:underline;text-decoration-skip-ink:none;">aceserviceco.com</span></div>
<div class="c" style="left:450px;top:350px;width:100px;height:20px"><span style="left:3px;top:3.04px;font-size:13px;font-weight:normal;color:#000;">Douglas</span></div>
<div class="c" style="left:551px;top:350px;width:100px;height:20px"><span style="left:3px;top:3.04px;font-size:13px;font-weight:normal;color:#000;">Aasen</span></div>
<div class="c" style="left:652px;top:350px;width:100px;height:20px"><span style="left:3px;top:3.04px;font-size:13px;font-weight:normal;color:#000;">Owner</span></div>
<div class="c" style="left:753px;top:350px;width:100px;height:20px"><span style="left:3px;top:3.04px;font-size:13px;font-weight:normal;color:#000;">781.449.4220</span></div>
<div class="c" style="left:46px;top:371px;width:100px;height:20px"><span style="left:3px;top:3.04px;font-size:13px;font-weight:normal;color:#000;">CommSoft</span></div>
<div class="c" style="left:147px;top:371px;width:100px;height:20px"><span style="left:3px;top:3.04px;font-size:13px;font-weight:normal;color:#000;">$5.5M</span></div>
<div class="c" style="left:248px;top:371px;width:100px;height:20px"><span style="left:3px;top:3.04px;font-size:13px;font-weight:normal;color:#000;">$1 - 10M</span></div>
<div class="c" style="left:349px;top:371px;width:100px;height:20px"><span style="left:3px;top:3.04px;font-size:13px;font-weight:normal;color:#1155cc;text-decoration:underline;text-decoration-skip-ink:none;">commsoft.net</span></div>
<div class="c" style="left:450px;top:371px;width:100px;height:20px"><span style="left:3px;top:3.04px;font-size:13px;font-weight:normal;color:#000;">Larry</span></div>
<div class="c" style="left:551px;top:371px;width:100px;height:20px"><span style="left:3px;top:3.04px;font-size:13px;font-weight:normal;color:#000;">Davis</span></div>
<div class="c" style="left:652px;top:371px;width:100px;height:20px"><span style="left:3px;top:3.04px;font-size:13px;font-weight:normal;color:#000;">Owner</span></div>
<div class="c" style="left:753px;top:371px;width:100px;height:20px"><span style="left:3px;top:3.04px;font-size:13px;font-weight:normal;color:#000;">518.431.7500</span></div>
<div class="c" style="left:46px;top:392px;width:100px;height:20px"><span style="left:3px;top:3.04px;font-size:13px;font-weight:normal;color:#000;">Behind the Scenes</span></div>
<div class="c" style="left:147px;top:392px;width:100px;height:20px"><span style="left:3px;top:3.04px;font-size:13px;font-weight:normal;color:#000;">$1M</span></div>
<div class="c" style="left:248px;top:392px;width:100px;height:20px"><span style="left:3px;top:3.04px;font-size:13px;font-weight:normal;color:#000;">$1 - 10M</span></div>
<div class="c" style="left:349px;top:392px;width:100px;height:20px"><span style="left:3px;top:3.04px;font-size:13px;font-weight:normal;color:#1155cc;text-decoration:underline;text-decoration-skip-ink:none;">btsfreight.com</span></div>
<div class="c" style="left:450px;top:392px;width:100px;height:20px"><span style="left:3px;top:3.04px;font-size:13px;font-weight:normal;color:#000;">Geoff</span></div>
<div class="c" style="left:551px;top:392px;width:100px;height:20px"><span style="left:3px;top:3.04px;font-size:13px;font-weight:normal;color:#000;">Abadee</span></div>
<div class="c" style="left:652px;top:392px;width:100px;height:20px"><span style="left:3px;top:3.04px;font-size:13px;font-weight:normal;color:#000;">Owner</span></div>
<div class="c" style="left:753px;top:392px;width:100px;height:20px"><span style="left:3px;top:3.04px;font-size:13px;font-weight:normal;color:#000;">818.344.9287</span></div>
<div class="c" style="left:46px;top:413px;width:100px;height:20px"><span style="left:3px;top:3.04px;font-size:13px;font-weight:normal;color:#000;">New England Diesel</span></div>
<div class="c" style="left:147px;top:413px;width:100px;height:20px"><span style="left:3px;top:3.04px;font-size:13px;font-weight:normal;color:#000;">$1M</span></div>
<div class="c" style="left:248px;top:413px;width:100px;height:20px"><span style="left:3px;top:3.04px;font-size:13px;font-weight:normal;color:#000;">$1 - 10M</span></div>
<div class="c" style="left:349px;top:413px;width:100px;height:20px"><span style="left:3px;top:3.04px;font-size:13px;font-weight:normal;color:#1155cc;text-decoration:underline;text-decoration-skip-ink:none;">nedc.com</span></div>
<div class="c" style="left:450px;top:413px;width:100px;height:20px"><span style="left:3px;top:3.04px;font-size:13px;font-weight:normal;color:#000;">Kimberly</span></div>
<div class="c" style="left:551px;top:413px;width:100px;height:20px"><span style="left:3px;top:3.04px;font-size:13px;font-weight:normal;color:#000;">Abare</span></div>
<div class="c" style="left:652px;top:413px;width:100px;height:20px"><span style="left:3px;top:3.04px;font-size:13px;font-weight:normal;color:#000;">Owner</span></div>
<div class="c" style="left:753px;top:413px;width:100px;height:20px"><span style="left:3px;top:3.04px;font-size:13px;font-weight:normal;color:#000;">978.686.6332</span></div>
<div class="c" style="left:46px;top:434px;width:100px;height:20px"><span style="left:3px;top:3.04px;font-size:13px;font-weight:normal;color:#000;">The Development Foundation</span></div>
<div class="c" style="left:147px;top:434px;width:100px;height:20px"><span style="left:3px;top:3.04px;font-size:13px;font-weight:normal;color:#000;">$2.2M</span></div>
<div class="c" style="left:248px;top:434px;width:100px;height:20px"><span style="left:3px;top:3.04px;font-size:13px;font-weight:normal;color:#000;">$1 - 10M</span></div>
<div class="c" style="left:349px;top:434px;width:100px;height:20px"><span style="left:3px;top:3.04px;font-size:13px;font-weight:normal;color:#1155cc;text-decoration:underline;text-decoration-skip-ink:none;">thedevelopmentfoundation.com</span></div>
<div class="c" style="left:450px;top:434px;width:100px;height:20px"><span style="left:3px;top:3.04px;font-size:13px;font-weight:normal;color:#000;">Suzanne</span></div>
<div class="c" style="left:551px;top:434px;width:100px;height:20px"><span style="left:3px;top:3.04px;font-size:13px;font-weight:normal;color:#000;">Abate</span></div>
<div class="c" style="left:652px;top:434px;width:100px;height:20px"><span style="left:3px;top:3.04px;font-size:13px;font-weight:normal;color:#000;">Owner</span></div>
<div class="c" style="left:753px;top:434px;width:100px;height:20px"><span style="left:3px;top:3.04px;font-size:13px;font-weight:normal;color:#000;">213.814.5520</span></div>
<div class="c" style="left:46px;top:455px;width:100px;height:20px"><span style="left:3px;top:3.04px;font-size:13px;font-weight:normal;color:#000;">SofCom</span></div>
<div class="c" style="left:147px;top:455px;width:100px;height:20px"><span style="left:3px;top:3.04px;font-size:13px;font-weight:normal;color:#000;">$6.5M</span></div>
<div class="c" style="left:248px;top:455px;width:100px;height:20px"><span style="left:3px;top:3.04px;font-size:13px;font-weight:normal;color:#000;">$1 - 10M</span></div>
<div class="c" style="left:349px;top:455px;width:100px;height:20px"><span style="left:3px;top:3.04px;font-size:13px;font-weight:normal;color:#1155cc;text-decoration:underline;text-decoration-skip-ink:none;">sofcom.net</span></div>
<div class="c" style="left:450px;top:455px;width:100px;height:20px"><span style="left:3px;top:3.04px;font-size:13px;font-weight:normal;color:#000;">Ayal</span></div>
<div class="c" style="left:551px;top:455px;width:100px;height:20px"><span style="left:3px;top:3.04px;font-size:13px;font-weight:normal;color:#000;">Abbas</span></div>
<div class="c" style="left:652px;top:455px;width:100px;height:20px"><span style="left:3px;top:3.04px;font-size:13px;font-weight:normal;color:#000;">Owner</span></div>
<div class="c" style="left:753px;top:455px;width:100px;height:20px"><span style="left:3px;top:3.04px;font-size:13px;font-weight:normal;color:#000;">630.353.4300</span></div>
<div class="c" style="left:46px;top:476px;width:100px;height:20px"><span style="left:3px;top:3.04px;font-size:13px;font-weight:normal;color:#000;">Silicon Mountains Internet</span></div>
<div class="c" style="left:147px;top:476px;width:100px;height:20px"><span style="left:3px;top:3.04px;font-size:13px;font-weight:normal;color:#000;">$24.1M</span></div>
<div class="c" style="left:248px;top:476px;width:100px;height:20px"><span style="left:3px;top:3.04px;font-size:13px;font-weight:normal;color:#000;">$1 - 10M</span></div>
<div class="c" style="left:349px;top:476px;width:100px;height:20px"><span style="left:3px;top:3.04px;font-size:13px;font-weight:normal;color:#1155cc;text-decoration:underline;text-decoration-skip-ink:none;">smihosts.com</span></div>
<div class="c" style="left:450px;top:476px;width:100px;height:20px"><span style="left:3px;top:3.04px;font-size:13px;font-weight:normal;color:#000;">Guy</span></div>
<div class="c" style="left:551px;top:476px;width:100px;height:20px"><span style="left:3px;top:3.04px;font-size:13px;font-weight:normal;color:#000;">Abbate</span></div>
<div class="c" style="left:652px;top:476px;width:100px;height:20px"><span style="left:3px;top:3.04px;font-size:13px;font-weight:normal;color:#000;">Owner</span></div>
<div class="c" style="left:753px;top:476px;width:100px;height:20px"><span style="left:3px;top:3.04px;font-size:13px;font-weight:normal;color:#000;">828.454.0778</span></div>
<div class="r" style="left:46px;top:155px;width:101px;height:27px;box-sizing:border-box;border-style:solid;border-color:#1a73e8;border-width:1px 2px 2px 1px"></div>
<div class="r" style="left:142px;top:177px;width:6px;height:6px;background:#1a73e8;border:1px solid #fff"></div>
<div class="r" style="left:666px;top:26px;width:108px;height:41px;background:#e6f4ea;border-radius:4px;box-shadow:0 1px 2px rgba(60,64,67,0.18),0 1px 3px 1px rgba(60,64,67,0.08)"></div>
<div class="t" style="left:690px;top:37.83px;font-size:14px;color:#202124;font-weight:normal;transform:scaleX(0.935);transform-origin:0 0;">Working…</div>
</body></html>
